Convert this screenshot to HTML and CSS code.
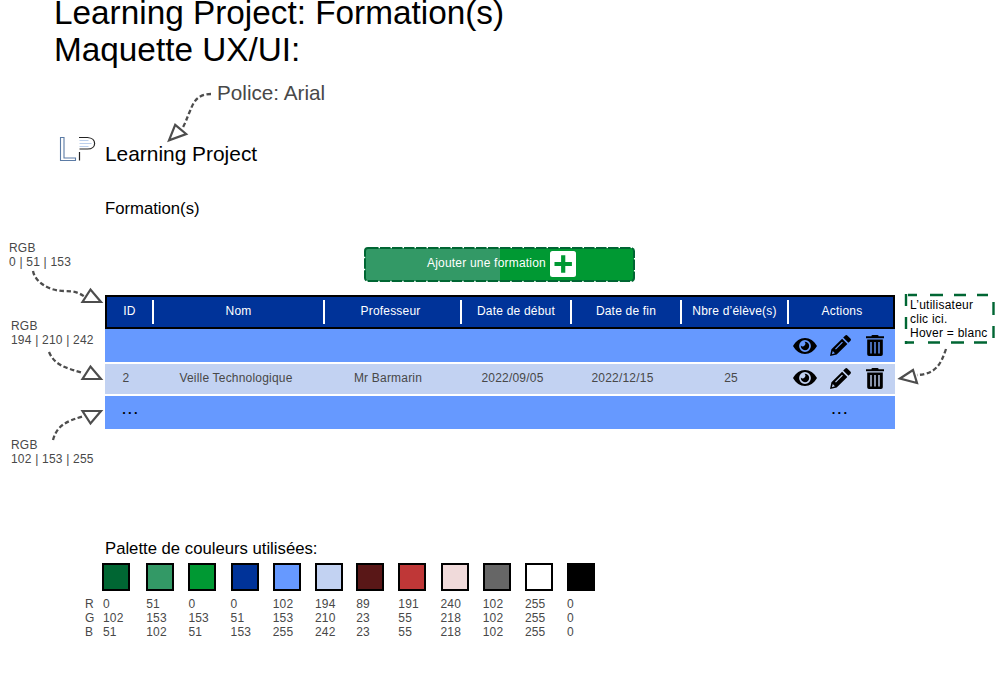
FILE: index.html
```html
<!DOCTYPE html>
<html lang="fr">
<head>
<meta charset="utf-8">
<title>Learning Project: Formation(s)</title>
<link rel="stylesheet" href="styles.css">
</head>
<body>
<svg class="defs" width="0" height="0">
  <symbol id="eye" viewBox="0 0 24 16">
    <path fill-rule="evenodd" d="M0 8C3 2.700 7.200 0 12 0s9 2.700 12 8c-3 5.300-7.200 8-12 8S3 13.300 0 8zM12 2.100a5.900 5.900 0 1 0 0 11.800 5.900 5.900 0 0 0 0-11.800z"/>
    <path d="M11.500 3.800a4.200 4.200 0 1 1-3.700 3.800 2.500 2.500 0 0 0 3.700-3.800z"/>
  </symbol>
  <symbol id="pencil" viewBox="0 0 22 22">
    <path fill-rule="evenodd" d="M0 22l1.500-7L12.700 3.800l5.500 5.500L7 20.500zM2 20.100l3.200-.9-2.300-2.400zM5.300 14.300l.9.900 7.300-7.300-.9-.9z"/>
    <path d="M13.800 2.700l2-2q1.300-1.300 2.600 0l2.900 2.900q1.300 1.300 0 2.600l-2 2z"/>
  </symbol>
  <symbol id="trash" viewBox="0 0 18 21">
    <path d="M0 1.200h5.500V.8Q5.500 0 6.500 0h5q1 0 1 .8v.4H18v2H0z"/>
    <path fill-rule="evenodd" d="M1.200 4.500h15.600v14.700q0 1.800-1.800 1.800H3q-1.800 0-1.800-1.800zM4.300 7v11.500h1.400V7zM8.300 7v11.500h1.400V7zM12.300 7v11.500h1.400V7z"/>
  </symbol>
</svg>

<main class="board">
  <h1 class="title">Learning Project: Formation(s)<br>Maquette UX/UI:</h1>

  <section class="mockup">
    <header class="brand">
      <svg class="logo" viewBox="0 0 38 28">
        <path class="logo-l" d="M1.500 1.500h3.500v20.500h11.500v2.500h-15z"/>
        <path class="logo-lines" d="M20.500 4.500h9M20.500 7.500h12M20.500 10.500h9"/>
        <path class="logo-p" d="M20 1.500h8.500c9.500.5 9.500 11.500 0 11.500h-8M20.500 16v8.500"/>
      </svg>
      <span class="brand-name">Learning Project</span>
    </header>

    <h2 class="heading">Formation(s)</h2>

    <div class="add">
      <span class="add-label">Ajouter une formation</span>
      <svg class="add-icon" viewBox="0 0 26 26"><rect width="26" height="26" rx="2.500" fill="#fff"/><path d="M13.200 4.300v17.400M4.500 13h17.400" stroke="#009933" stroke-width="4.200"/></svg>
      <svg class="add-outline" viewBox="0 0 271 35"><rect x="1" y="1" width="269" height="33" rx="3"/></svg>
    </div>

    <div class="table">
      <div class="row head">
        <span>ID</span><span>Nom</span><span>Professeur</span><span>Date de début</span><span>Date de fin</span><span>Nbre d’élève(s)</span><span>Actions</span>
      </div>
      <div class="row">
        <span></span><span></span><span></span><span></span><span></span><span></span>
        <div class="actions"><svg class="eye"><use href="#eye"/></svg><svg class="pencil"><use href="#pencil"/></svg><svg class="trash"><use href="#trash"/></svg></div>
      </div>
      <div class="row light">
        <span>2</span><span>Veille Technologique</span><span>Mr Barmarin</span><span>2022/09/05</span><span>2022/12/15</span><span>25</span>
        <div class="actions"><svg class="eye"><use href="#eye"/></svg><svg class="pencil"><use href="#pencil"/></svg><svg class="trash"><use href="#trash"/></svg></div>
      </div>
      <div class="row more">
        <span>...</span><span></span><span></span><span></span><span></span><span></span><span>...</span>
      </div>
    </div>
  </section>

  <section class="palette">
    <h2 class="heading">Palette de couleurs utilisées:</h2>
    <div class="colors">
      <div class="keys">R<br>G<br>B</div>
      <div class="color"><i class="c1"></i>0<br>102<br>51</div>
      <div class="color shift"><i class="c2"></i>51<br>153<br>102</div>
      <div class="color shift"><i class="c3"></i>0<br>153<br>51</div>
      <div class="color shift"><i class="c4"></i>0<br>51<br>153</div>
      <div class="color shift"><i class="c5"></i>102<br>153<br>255</div>
      <div class="color shift"><i class="c6"></i>194<br>210<br>242</div>
      <div class="color"><i class="c7"></i>89<br>23<br>23</div>
      <div class="color"><i class="c8"></i>191<br>55<br>55</div>
      <div class="color"><i class="c9"></i>240<br>218<br>218</div>
      <div class="color"><i class="c10"></i>102<br>102<br>102</div>
      <div class="color"><i class="c11"></i>255<br>255<br>255</div>
      <div class="color"><i class="c12"></i>0<br>0<br>0</div>
    </div>
  </section>

  <svg class="arrows" viewBox="0 0 1000 678">
    <g class="dash">
      <path d="M211 94c-15 0-18 10-21 17-3 7-5 13-8 18"/>
      <path d="M33 271c2 11 16 20 31 20 10 0 14 1 21 6"/>
      <path d="M49 352c6 14 18 16 34 21"/>
      <path d="M53 440c4-15 14-19 31-24"/>
      <path d="M946 349c-5 15-10 25-29 26"/>
    </g>
    <g class="tip">
      <path d="M169 140.300l6.200-15.500 11 9.200z"/>
      <path d="M101 302h-18.500l8-12.500z"/>
      <path d="M101 379h-18.500l8-12.500z"/>
      <path d="M101 411h-18.500l8 12.500z"/>
      <path d="M900 378.500l13-8.500 4 13z"/>
    </g>
    <g class="hint-box">
      <path d="M908 295h9M930 295h13M954 295h12M977 295h11"/>
      <path d="M905 342.500h9M928 342.500h12M951 342.500h13M974 342.500h13"/>
      <path d="M906 294v12M906 317v12M906 341v3"/>
      <path d="M993.500 302v13M993.500 326v12"/>
    </g>
  </svg>
  <p class="note font-note">Police: Arial</p>
  <p class="note n1">RGB<br>0 | 51 | 153</p>
  <p class="note n2">RGB<br>194 | 210 | 242</p>
  <p class="note n3">RGB<br>102 | 153 | 255</p>
  <p class="note hint">L’utilisateur<br>clic ici.<br>Hover = blanc</p>
</main>
</body>
</html>
```
FILE: styles.css
```css
* { box-sizing: border-box; }
body {
  margin: 0;
  background: #fff;
  color: #000;
  font: 12px/14px "Liberation Sans", Arial, sans-serif;
  letter-spacing: .2px;
}
.defs { position: absolute; }
.board { position: relative; width: 1000px; height: 678px; overflow: hidden; display: flex; flex-direction: column; }
.title { margin: -6px 0 0 54px; font-size: 33.35px; line-height: 37px; font-weight: 400; letter-spacing: 0; }
.mockup { width: 790px; margin: 68px 0 0 105px; }
.brand { display: flex; align-items: flex-end; height: 30px; margin-left: -46px; gap: 8px; }
.logo { width: 38px; height: 28px; align-self: flex-start; fill: none; }
.logo-l { stroke: #5b7ba5; stroke-width: 1.1; }
.logo-lines { stroke: #bdd0ec; }
.logo-p { stroke: #222; stroke-width: 1.2; }
.brand-name { font-size: 20.9px; line-height: 24px; letter-spacing: 0; }
.heading { margin: 0; font-size: 16.7px; line-height: 20px; font-weight: 400; letter-spacing: 0; }
.mockup .heading { margin-top: 33px; }

.add {
  position: relative;
  display: flex;
  align-items: center;
  width: 271px;
  height: 35px;
  margin: 28px 0 0 259px;
  padding-left: 62px;
  gap: 4px;
  border: 1px solid transparent;
  border-radius: 4px;
  background: linear-gradient(90deg, #339966 135px, #009933 135px) padding-box;
  color: #fff;
}
.add-label { width: 119px; white-space: nowrap; padding-bottom: 3px; }
.add-icon { width: 26px; height: 26px; margin-bottom: 2px; }
.add-outline { position: absolute; inset: -1px; fill: none; stroke: #006633; stroke-width: 2; stroke-dasharray: 10.500 1.500; }

.table { margin-top: 13px; }
.row {
  display: grid;
  grid-template-columns: 49px 171px 137px 110px 110px 107px 106px;
  align-items: center;
  height: 33px;
  background: #6699ff;
  color: #484848;
  text-align: center;
}
.row > span { padding-right: 7px; }
.head { height: 34px; position: relative; background: #003399; color: #fff; box-shadow: inset 0 0 0 2px #000; }
.row.head > span { height: 24px; padding: 4px 0 0 0; border-right: 2px solid #fff; }
.row.head > span:first-child { padding-left: 2px; }
.row.head > span:nth-child(3) { padding-right: 4px; }
.row.head > span:last-child { border: 0; }
.row.light { height: 30px; margin: 2px 0; background: #c2d2f2; }
.row.light > span { padding-bottom: 2px; }
.row.light > span:nth-child(3) { padding-right: 11px; }
.row.light > span:nth-child(n+4) { padding-right: 9px; }
.row.more { color: #000; letter-spacing: 2.200px; font-size: 13px; font-weight: 700; }
.row.more > span { padding: 0 0 6px 3px; }
.row.more > span:last-child { padding: 0 3px 6px 0; }
.actions { display: flex; align-items: center; padding-left: 4px; }
.row.light .actions { padding-bottom: 2px; }
.eye { width: 24px; height: 16px; }
.pencil { width: 21px; height: 21px; margin-left: 13px; }
.trash { width: 18px; height: 21px; margin-left: 15px; }

.palette { margin: 110px 0 0 85px; }
.palette .heading { margin-left: 20px; }
.colors { display: flex; margin-top: 4px; color: #484848; }
.keys { width: 18px; padding-top: 34px; }
.color { width: 42.200px; }
.color i { display: block; width: 28px; height: 28px; margin: 0 0 6px 0; border: 2px solid #000; }
.color:nth-child(2) i { margin-left: -1px; }
.shift { padding-left: 1px; }
.c1 { background: #006633; }
.c2 { background: #339966; }
.c3 { background: #009933; }
.c4 { background: #003399; }
.c5 { background: #6699ff; }
.c6 { background: #c2d2f2; }
.c7 { background: #591717; }
.c8 { background: #bf3737; }
.c9 { background: #f0dada; }
.c10 { background: #666; }
.c11 { background: #fff; }
.c12 { background: #000; }

/* Annotations drawn over the board */
.arrows { position: absolute; inset: 0; fill: none; pointer-events: none; }
.dash { stroke: #4d4d4d; stroke-width: 2.300; stroke-dasharray: 4.500 2.500; }
.tip { stroke: #4d4d4d; stroke-width: 2.200; fill: #fff; }
.hint-box { stroke: #006633; stroke-width: 2.400; }
.note { position: absolute; margin: 0; color: #484848; white-space: nowrap; }
.font-note { left: 217px; top: 81px; font-size: 20.700px; line-height: 24px; letter-spacing: 0; }
.n1 { left: 9px; top: 241px; }
.n2 { left: 11px; top: 319px; }
.n3 { left: 11px; top: 438px; }
.hint { left: 910px; top: 298px; color: #000; letter-spacing: .25px; }
```
